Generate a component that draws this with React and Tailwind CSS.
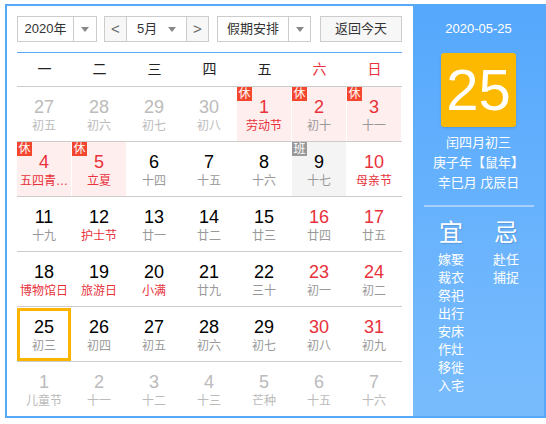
import React from 'react';

const FONT = { fontFamily: '"Liberation Sans", "Noto Sans CJK SC", sans-serif' };

// t: p = other month, h = 休, w = 班, f = festival text in red, r = red number
const ROWS = [
  [
    ['27', '初五', 'p'], ['28', '初六', 'p'], ['29', '初七', 'p'], ['30', '初八', 'p'],
    ['1', '劳动节', 'h f r'], ['2', '初十', 'h r'], ['3', '十一', 'h r'],
  ],
  [
    ['4', '五四青…', 'h f r'], ['5', '立夏', 'h f r'], ['6', '十四', ''], ['7', '十五', ''],
    ['8', '十六', ''], ['9', '十七', 'w'], ['10', '母亲节', 'f r'],
  ],
  [
    ['11', '十九', ''], ['12', '护士节', 'f'], ['13', '廿一', ''], ['14', '廿二', ''],
    ['15', '廿三', ''], ['16', '廿四', 'r'], ['17', '廿五', 'r'],
  ],
  [
    ['18', '博物馆日', 'f'], ['19', '旅游日', 'f'], ['20', '小满', 'f'], ['21', '廿九', ''],
    ['22', '三十', ''], ['23', '初一', 'r'], ['24', '初二', 'r'],
  ],
  [
    ['25', '初三', 's'], ['26', '初四', ''], ['27', '初五', ''], ['28', '初六', ''],
    ['29', '初七', ''], ['30', '初八', 'r'], ['31', '初九', 'r'],
  ],
  [
    ['1', '儿童节', 'p'], ['2', '十一', 'p'], ['3', '十二', 'p'], ['4', '十三', 'p'],
    ['5', '芒种', 'p'], ['6', '十五', 'p'], ['7', '十六', 'p'],
  ],
];

const WEEK = ['一', '二', '三', '四', '五', '六', '日'];
const YI = ['嫁娶', '裁衣', '祭祀', '出行', '安床', '作灶', '移徙', '入宅'];
const JI = ['赴任', '捕捉'];

function Caret() {
  return <span className="w-0 h-0 border-l-[4px] border-r-[4px] border-t-[5px] border-l-transparent border-r-transparent border-t-[#888]" />;
}

function Cell({ day }) {
  const [num, lunar, t] = day;
  const other = t.includes('p');
  const holiday = t.includes('h');
  const work = t.includes('w');
  const selected = t.includes('s');

  let numColor = 'text-black';
  if (other) numColor = 'text-[#bbbbbb]';
  else if (t.includes('r')) numColor = 'text-[#e8313a]';

  let lunarColor = 'text-[#999999]';
  if (other) lunarColor = 'text-[#bbbbbb]';
  else if (t.includes('f')) lunarColor = 'text-[#e8313a]';

  let bg = '';
  if (holiday) bg = 'bg-[#ffeeee]';
  if (work) bg = 'bg-[#f4f4f4]';

  return (
    <div className="relative h-[54px] pr-px">
      <div className={`h-full flex flex-col items-center pt-[9px] ${bg}`}>
        <div className={`text-[18px] leading-[22px] ${numColor}`}>{num}</div>
        <div className={`whitespace-nowrap text-center text-[12px] leading-[16px] ${lunarColor}`}>{lunar}</div>
      </div>
      {holiday && (
        <span className="absolute top-0 left-0 w-[15px] h-[14px] bg-[#f4462f] text-white text-[12px] leading-[14px] text-center">休</span>
      )}
      {work && (
        <span className="absolute top-0 left-0 w-[15px] h-[14px] bg-[#999999] text-white text-[12px] leading-[14px] text-center">班</span>
      )}
      {selected && (
        <div className="absolute top-px left-0 right-px bottom-0 border-[3px] border-[#fbb500]" />
      )}
    </div>
  );
}

export default function App() {
  return (
    <div className="bg-white w-[546px] h-[424px] pl-[5px] pt-[4px]" style={FONT}>
      <div className="w-[541px] h-[414px] border-2 border-[#58a8fa] flex">
        <div className="w-[406px] pl-[10px] pr-[11px] pt-[10px]">
          <div className="flex items-center h-[26px] text-[13px] text-[#333] whitespace-nowrap">
            <div className="w-[80px] h-[26px] border border-[#cccccc] flex">
              <span className="w-[55px] flex items-center justify-center">2020年</span>
              <span className="flex-1 border-l border-[#cccccc] flex items-center justify-center"><Caret /></span>
            </div>
            <div className="ml-[7px] w-[105px] h-[26px] border border-[#cccccc] flex">
              <span className="w-[22px] bg-[#f7f7f7] border-r border-[#cccccc] flex items-center justify-center text-[#666] text-[15px]">&lt;</span>
              <span className="flex-1 flex items-center pl-[10px]">
                <span>5月</span>
                <span className="ml-[11px] flex"><Caret /></span>
              </span>
              <span className="w-[22px] bg-[#f7f7f7] border-l border-[#cccccc] flex items-center justify-center text-[#666] text-[15px]">&gt;</span>
            </div>
            <div className="ml-[8px] w-[94px] h-[26px] border border-[#cccccc] flex">
              <span className="w-[70px] flex items-center justify-center">假期安排</span>
              <span className="flex-1 border-l border-[#cccccc] flex items-center justify-center"><Caret /></span>
            </div>
            <div className="ml-[9px] w-[82px] h-[26px] border border-[#cccccc] bg-[#f7f7f7] flex items-center justify-center">
              返回今天
            </div>
          </div>
          <div className="mt-[10px] border-t border-[#58a8fa] grid grid-cols-7 h-[34px] items-center text-[14px] text-[#222]">
            {WEEK.map((w, i) => (
              <div key={w} className={`text-center ${i >= 5 ? 'text-[#e8313a]' : ''}`}>{w}</div>
            ))}
          </div>
          {ROWS.map((row, ri) => (
            <div key={ri} className="grid grid-cols-7 border-t border-[#cccccc]">
              {row.map((d, di) => (
                <Cell key={di} day={d} />
              ))}
            </div>
          ))}
        </div>
        <div className="flex-1 bg-linear-to-b from-[#55a8fd] to-[#79bcfd] text-white flex flex-col items-center">
          <div className="mt-[14px] text-[13px] leading-[18px]">2020-05-25</div>
          <div className="mt-[15px] w-[75px] h-[74px] rounded-[3px] bg-[#fdb900] shadow-sm flex items-center justify-center text-[58px] leading-none">
            25
          </div>
          <div className="mt-[6px] text-[13px] leading-[20px] text-center">
            <div>闰四月初三</div>
            <div>庚子年【鼠年】</div>
            <div>辛巳月 戊辰日</div>
          </div>
          <div className="mt-[12px] w-[110px] h-[2px] bg-[#a8d0fd]" />
          <div className="mt-[11px] flex gap-[15px]">
            <div className="w-[40px] flex flex-col items-center">
              <div className="text-[24px] leading-[30px] [text-shadow:1px_1px_1px_rgba(0,0,0,0.15)]">宜</div>
              <div className="mt-[3px] text-[13px] leading-[18px] text-center">
                {YI.map((y) => <div key={y}>{y}</div>)}
              </div>
            </div>
            <div className="w-[40px] flex flex-col items-center">
              <div className="text-[24px] leading-[30px] [text-shadow:1px_1px_1px_rgba(0,0,0,0.15)]">忌</div>
              <div className="mt-[3px] text-[13px] leading-[18px] text-center">
                {JI.map((y) => <div key={y}>{y}</div>)}
              </div>
            </div>
          </div>
        </div>
      </div>
    </div>
  );
}
